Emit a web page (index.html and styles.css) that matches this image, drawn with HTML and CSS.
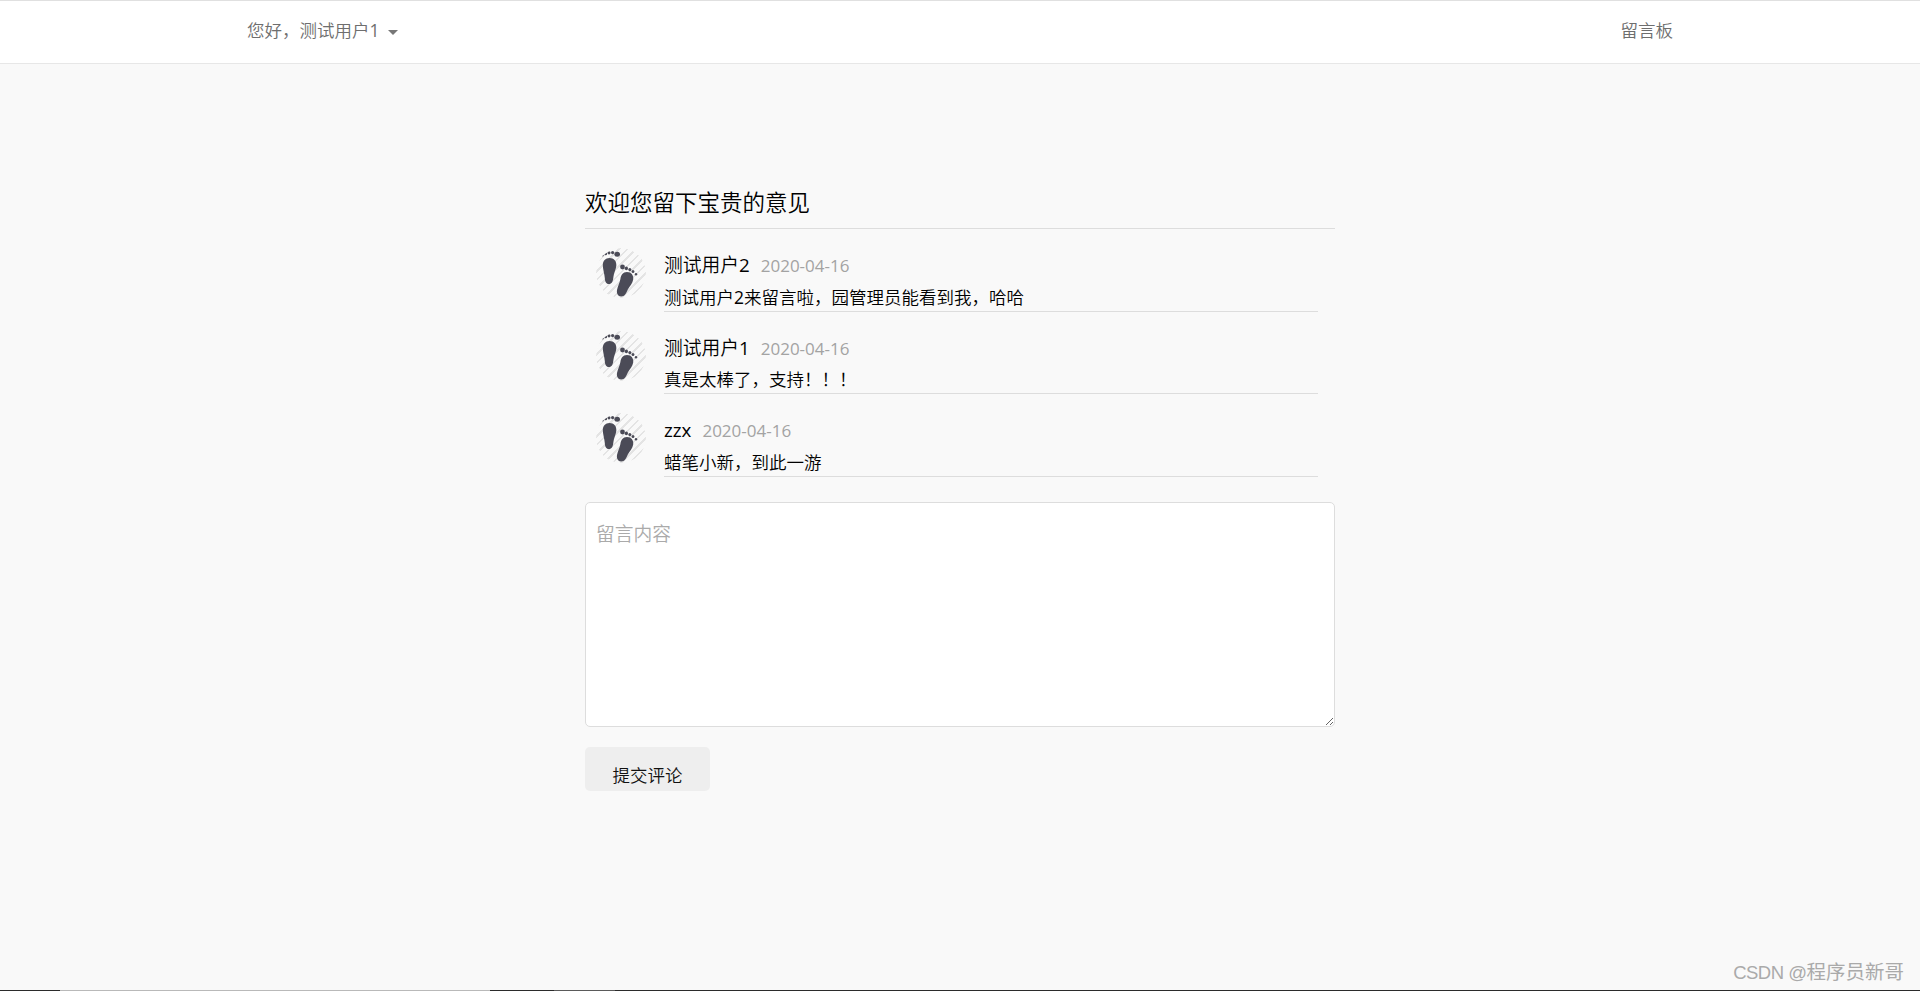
FILE: index.html
```html
<!DOCTYPE html>
<html lang="zh-CN">
<head>
<meta charset="utf-8">
<title>留言板</title>
<link rel="stylesheet" href="styles.css">
</head>
<body>
<svg class="defs" width="0" height="0" aria-hidden="true">
  <symbol id="feet" viewBox="0 0 50 50">
    <path d="M13.5 10C18 10 20.8 13 20.3 18C19.8 22 17.8 25 17.4 29C17 33.5 15.8 36 12.8 36C10 36 9 33.5 8.8 30C8.6 26 6.8 21.5 6.8 17C6.8 13 9.4 10 13.5 10Z"/>
    <ellipse cx="6.4" cy="7.2" rx="1.3" ry="1.4"/><ellipse cx="9.7" cy="5.7" rx="1.4" ry="1.5"/><ellipse cx="13" cy="4.8" rx="1.5" ry="1.6"/><ellipse cx="16.6" cy="4.6" rx="1.6" ry="1.7"/><ellipse cx="21.2" cy="6.2" rx="2.8" ry="2.5"/>
    <path d="M31 24C35.2 24 37.8 27 37.2 31.5C36.6 35.5 33.8 38 31.8 41.5C30.3 45 29 48.5 25 48.5C22 48.5 20.4 45.5 21 42C21.7 38 23.8 35 24.4 31C25 27 26.8 24 31 24Z"/>
    <ellipse cx="26.5" cy="19" rx="2.4" ry="2.4"/><ellipse cx="30.4" cy="20.4" rx="1.6" ry="1.8"/><ellipse cx="33.8" cy="21.6" rx="1.5" ry="1.6"/><ellipse cx="37" cy="23.5" rx="1.4" ry="1.5"/><ellipse cx="40" cy="26.3" rx="1.2" ry="1.3"/>
  </symbol>
</svg>

<nav class="navbar">
  <a class="nav-user" href="#">您好，测试用户<span class="latin">1</span><span class="caret"></span></a>
  <a class="nav-link" href="#">留言板</a>
</nav>

<main class="board">
  <h3 class="board-title">欢迎您留下宝贵的意见</h3>
  <ul class="messages">
    <li class="message">
      <span class="avatar"><svg class="feet"><use href="#feet"/></svg></span>
      <div class="message-body">
        <div class="message-head"><span class="author">测试用户<span class="latin">2</span></span><span class="date">2020-04-16</span></div>
        <p class="message-text">测试用户<span class="latin">2</span>来留言啦，园管理员能看到我，哈哈</p>
      </div>
    </li>
    <li class="message">
      <span class="avatar"><svg class="feet"><use href="#feet"/></svg></span>
      <div class="message-body">
        <div class="message-head"><span class="author">测试用户<span class="latin">1</span></span><span class="date">2020-04-16</span></div>
        <p class="message-text">真是太棒了，支持！！！</p>
      </div>
    </li>
    <li class="message">
      <span class="avatar"><svg class="feet"><use href="#feet"/></svg></span>
      <div class="message-body">
        <div class="message-head"><span class="author latin">zzx</span><span class="date">2020-04-16</span></div>
        <p class="message-text">蜡笔小新，到此一游</p>
      </div>
    </li>
  </ul>
  <form class="comment-form">
    <textarea class="comment-input" placeholder="留言内容"></textarea>
    <button class="submit" type="button">提交评论</button>
  </form>
</main>

<div class="edge-strip"></div>
<div class="watermark"><span class="watermark-latin">CSDN @</span>程序员新哥</div>
</body>
</html>
```

FILE: styles.css
```css
* { box-sizing: border-box; }
html, body { margin: 0; padding: 0; }
body {
  position: relative;
  display: flex;
  flex-direction: column;
  height: 991px;
  overflow: hidden;
  background: #f9f9f9;
  color: #000;
  font-family: "Open Sans", "Noto Sans CJK SC", sans-serif;
  font-size: 17.5px;
  font-weight: 350;
}
.latin { font-weight: 400; }
.defs { position: absolute; }
.navbar {
  display: flex;
  flex: none;
  justify-content: space-between;
  align-items: center;
  height: 64px;
  padding: 0 247px 4px 247px;
  background: #fff;
  border-top: 1px solid #e0e0e0;
  border-bottom: 1px solid #e7e7e7;
}
.nav-user, .nav-link { color: #6e6e6e; text-decoration: none; line-height: 26px; }
.caret {
  display: inline-block;
  margin-left: 8px;
  vertical-align: middle;
  border-top: 5px solid #777;
  border-left: 5px solid transparent;
  border-right: 5px solid transparent;
}
.board { width: 750px; margin-left: 585px; padding-top: 120px; }
.board-title {
  margin: 0;
  padding-bottom: 6px;
  font-size: 22.5px;
  font-weight: 350;
  line-height: 38px;
  border-bottom: 1px solid #ddd;
}
.messages { list-style: none; margin: 19px 0 0; padding: 0 17.5px 0 11px; }
.message { display: flex; gap: 18px; margin-bottom: 19px; }
.message:last-child { margin-bottom: 0; }
.avatar {
  flex: none;
  width: 50px;
  height: 50px;
  border-radius: 50%;
  background: repeating-linear-gradient(135deg, #f9f9f9 0 4px, #e4e4e4 4px 6px);
  -webkit-mask-image: radial-gradient(circle, #000 78%, transparent 100%);
  mask-image: radial-gradient(circle, #000 78%, transparent 100%);
}
.feet { display: block; width: 50px; height: 50px; fill: #4b4b57; filter: blur(.3px); }
.message-body { flex: 1; height: 64px; padding-top: 3px; border-bottom: 1px solid #ddd; }
.message:nth-child(2) .message-body { height: 63px; }
.message:nth-child(2) .message-text { margin-top: 4px; }
.message-head { display: flex; align-items: baseline; height: 28px; line-height: 28px; }
.author { font-size: 18.75px; }
.date { margin-left: 11px; font-size: 17px; font-weight: 400; color: #a3a3a3; }
.message-text { margin: 5px 0 0; line-height: 26px; }
.comment-form { margin-top: 25px; }
.comment-input {
  display: block;
  width: 100%;
  height: 225px;
  padding: 18px 10px;
  background: #fff;
  border: 1px solid #ddd;
  border-radius: 5px;
  font-family: inherit;
  font-size: 18.75px;
  font-weight: 350;
  line-height: 26px;
  outline: none;
}
.comment-input::placeholder { color: #aaa; opacity: 1; }
.submit {
  display: block;
  width: 125px;
  height: 44px;
  margin-top: 20px;
  padding: 12px 0 0;
  background: #eee;
  border: 0;
  border-radius: 5px;
  color: #111;
  font-family: inherit;
  font-size: 17.5px;
  font-weight: 350;
  line-height: 26px;
}
.edge-strip {
  flex: none;
  height: 1px;
  margin-top: auto;
  background: linear-gradient(to right, #2b2b2b 60px, #b9b9b9 60px 490px, #2b2b2b 490px 554px, #5a5a5a 554px 615px, #2b2b2b 615px);
}
.watermark {
  position: absolute;
  right: 16px;
  bottom: 4px;
  color: #aaa;
  font-family: "Liberation Sans", "Noto Sans CJK SC", sans-serif;
  font-size: 19.5px;
  font-weight: 400;
  line-height: 28px;
}
.watermark-latin { font-size: 18.5px; letter-spacing: -.5px; }
```
